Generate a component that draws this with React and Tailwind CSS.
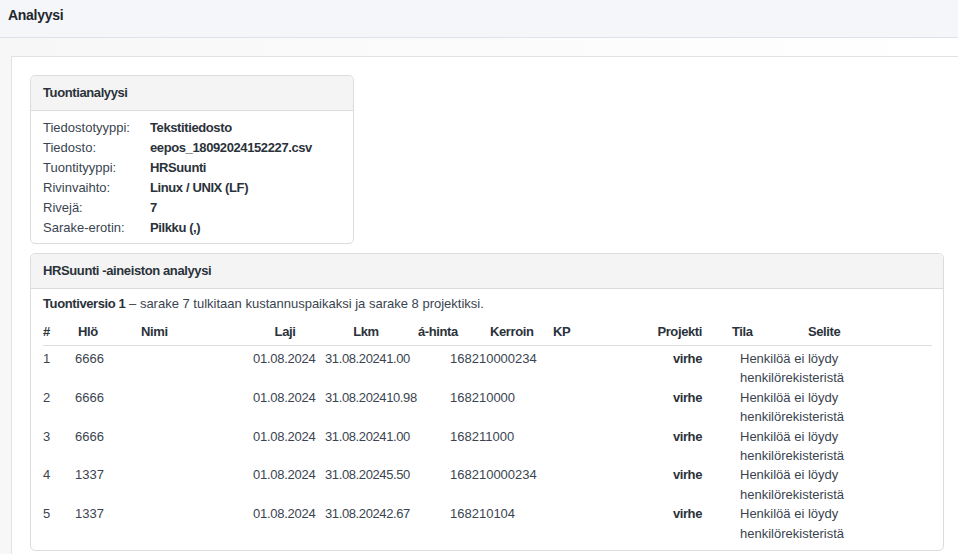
import React from 'react';

const info = [
    ['Tiedostotyyppi:', 'Tekstitiedosto'],
    ['Tiedosto:', 'eepos_18092024152227.csv'],
    ['Tuontityyppi:', 'HRSuunti'],
    ['Rivinvaihto:', 'Linux / UNIX (LF)'],
    ['Rivejä:', '7'],
    ['Sarake-erotin:', 'Pilkku (,)'],
];

const rows = [
    { n: '1', hlo: '6666', laji: '01.08.2024', lkm: '31.08.20241.00', kerroin: '168210000234' },
    { n: '2', hlo: '6666', laji: '01.08.2024', lkm: '31.08.202410.98', kerroin: '168210000' },
    { n: '3', hlo: '6666', laji: '01.08.2024', lkm: '31.08.20241.00', kerroin: '168211000' },
    { n: '4', hlo: '1337', laji: '01.08.2024', lkm: '31.08.20245.50', kerroin: '168210000234' },
    { n: '5', hlo: '1337', laji: '01.08.2024', lkm: '31.08.20242.67', kerroin: '168210104' },
];

const Card = ({ title, className, children }) => (
    <div className={`border border-[#dcdcdc] rounded-[5px] bg-white ${className}`}>
        <div className="h-[35px] flex items-center px-3 bg-[#f4f4f4] border-b border-[#dcdcdc] rounded-t-[5px] font-bold text-[13px] tracking-[-0.03em] text-[#2b323a]">
            {title}
        </div>
        {children}
    </div>
);

export default function App() {
    return (
        <div className="min-h-screen bg-white text-[13px] text-[#3a4450]" style={{ fontFamily: '"Liberation Sans", Arial, sans-serif' }}>
            {/* Page header */}
            <div className="h-[38px] bg-[#f5f6fa] border-b border-[#dfe2ea] px-2 pt-[5px]">
                <h1 className="text-[14px] font-bold tracking-[-0.02em] text-[#1f262d]">Analyysi</h1>
            </div>

            <div className="pt-[18px] pl-[11px] bg-gradient-to-r from-[#f7f7f7] to-white">
                <div className="border-l border-t border-[#e2e2e2] bg-white pt-[18px] pl-[18px] pb-[6px]">
                    {/* Tuontianalyysi */}
                    <Card title="Tuontianalyysi" className="w-[324px]">
                        <div className="px-3 pt-[7px] pb-[5px] leading-[20px]">
                            {info.map(([k, v]) => (
                                <div key={k} className="flex">
                                    <span className="w-[107px] shrink-0">{k}</span>
                                    <span className="font-bold tracking-[-0.03em] text-[#2b323a]">{v}</span>
                                </div>
                            ))}
                        </div>
                    </Card>

                    {/* HRSuunti analysis */}
                    <Card title="HRSuunti -aineiston analyysi" className="w-[914px] mt-[9px]">
                        <div className="pl-3 pr-[11px] pt-[5px] pb-[7px]">
                            <p className="leading-[20px]">
                                <span className="font-bold tracking-[-0.03em] text-[#2b323a]">Tuontiversio 1</span> – sarake 7 tulkitaan kustannuspaikaksi ja sarake 8 projektiksi.
                            </p>

                            <div className="mt-[4px] h-[28px] flex items-center border-b border-[#dedede] font-bold tracking-[-0.03em] text-[#2b323a]">
                                <div className="w-[32px]">#</div>
                                <div className="w-[66px] pl-[3px]">Hlö</div>
                                <div className="w-[109px]">Nimi</div>
                                <div className="w-[70px] text-center">Laji</div>
                                <div className="w-[92px] text-center">Lkm</div>
                                <div className="w-[72px] pl-[6px]">á-hinta</div>
                                <div className="w-[63px] pl-[6px]">Kerroin</div>
                                <div className="w-[73px] pl-[6px]">KP</div>
                                <div className="w-[82px] text-right">Projekti</div>
                                <div className="w-[106px] pl-[30px]">Tila</div>
                                <div className="flex-1">Selite</div>
                            </div>

                            <div className="pt-[3px] leading-[19.4px]">
                                {rows.map((r) => (
                                    <div key={r.n} className="flex items-start">
                                        <div className="w-[32px]">{r.n}</div>
                                        <div className="w-[66px]">{r.hlo}</div>
                                        <div className="w-[109px]"></div>
                                        <div className="w-[72px] pl-[3px] tracking-[-0.02em]">{r.laji}</div>
                                        <div className="w-[128px] pl-[3px] tracking-[-0.03em]">{r.lkm}</div>
                                        <div className="w-[170px]">{r.kerroin}</div>
                                        <div className="w-[82px] text-right font-bold tracking-[-0.03em] text-[#2b323a]">virhe</div>
                                        <div className="w-[38px]"></div>
                                        <div className="w-[150px]">Henkilöä ei löydy henkilörekisteristä</div>
                                    </div>
                                ))}
                            </div>
                        </div>
                    </Card>
                </div>
            </div>
        </div>
    );
}
